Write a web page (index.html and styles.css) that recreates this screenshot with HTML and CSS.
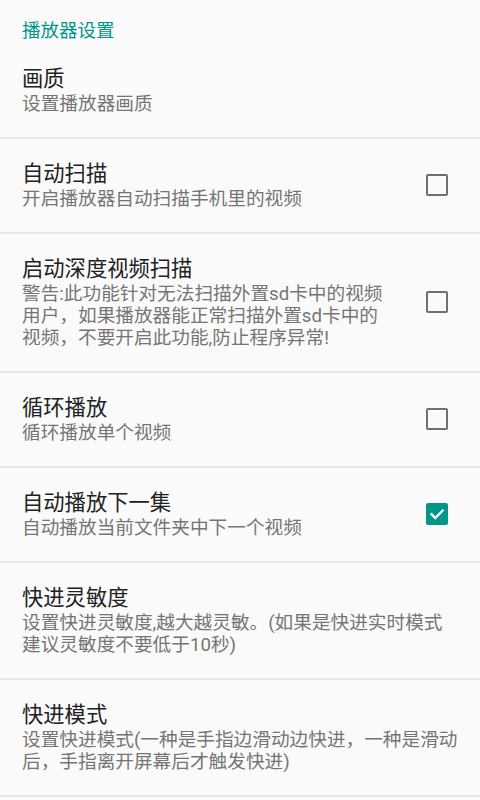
FILE: index.html
```html
<!DOCTYPE html>
<html lang="zh-CN">
<head>
    <meta charset="UTF-8">
    <meta name="viewport" content="width=device-width, initial-scale=1.0">
    <title>播放器设置</title>
    <link rel="stylesheet" href="styles.css">
</head>
<body>
    <div class="settings">
        <div class="category">播放器设置</div>

        <div class="pref">
            <div class="pref-text">
                <div class="pref-title">画质</div>
                <div class="pref-summary">设置播放器画质</div>
            </div>
        </div>

        <div class="pref">
            <div class="pref-text">
                <div class="pref-title">自动扫描</div>
                <div class="pref-summary">开启播放器自动扫描手机里的视频</div>
            </div>
            <span class="check"></span>
        </div>

        <div class="pref">
            <div class="pref-text">
                <div class="pref-title">启动深度视频扫描</div>
                <div class="pref-summary">警告:此功能针对无法扫描外置sd卡中的视频用户，如果播放器能正常扫描外置sd卡中的视频，不要开启此功能,防止程序异常!</div>
            </div>
            <span class="check"></span>
        </div>

        <div class="pref">
            <div class="pref-text">
                <div class="pref-title">循环播放</div>
                <div class="pref-summary">循环播放单个视频</div>
            </div>
            <span class="check"></span>
        </div>

        <div class="pref">
            <div class="pref-text">
                <div class="pref-title">自动播放下一集</div>
                <div class="pref-summary">自动播放当前文件夹中下一个视频</div>
            </div>
            <span class="check checked">
                <svg width="22" height="22" viewBox="0 0 22 22">
                    <path d="M5.5 11.2 L9.3 15 L16.6 7.6" fill="none" stroke="#fff" stroke-width="2.4" stroke-linecap="square"/>
                </svg>
            </span>
        </div>

        <div class="pref">
            <div class="pref-text">
                <div class="pref-title">快进灵敏度</div>
                <div class="pref-summary">设置快进灵敏度,越大越灵敏。(如果是快进实时模式建议灵敏度不要低于10秒)</div>
            </div>
        </div>

        <div class="pref">
            <div class="pref-text">
                <div class="pref-title">快进模式</div>
                <div class="pref-summary">设置快进模式(一种是手指边滑动边快进，一种是滑动后，手指离开屏幕后才触发快进)</div>
            </div>
        </div>
    </div>
</body>
</html>
```

FILE: styles.css
```css
* {
    box-sizing: border-box;
}

body {
    margin: 0;
    background-color: #fafafa;
    font-family: Roboto, "Noto Sans CJK SC", sans-serif;
}

.settings {
    width: 100%;
}

.category {
    padding: 19px 22px 1px;
    font-size: 18.5px;
    line-height: 24px;
    color: #009688;
}

.pref {
    display: flex;
    align-items: center;
    padding: 21px 20px 22px 22px;
    border-bottom: 2px solid #e6e6e6;
}

.pref-text {
    flex: 1;
}

.pref-title {
    font-size: 21.3px;
    line-height: 28px;
    color: #212121;
}

.pref-summary {
    font-size: 18.67px;
    line-height: 22px;
    color: #757575;
}

/* 复选框 */
.check {
    flex: none;
    width: 22px;
    height: 22px;
    margin-left: 36px;
    margin-right: 12px;
    border: 2px solid #707070;
    border-radius: 2px;
}

.check.checked {
    border: none;
    background: #009688;
}

.check svg {
    display: block;
}
```
